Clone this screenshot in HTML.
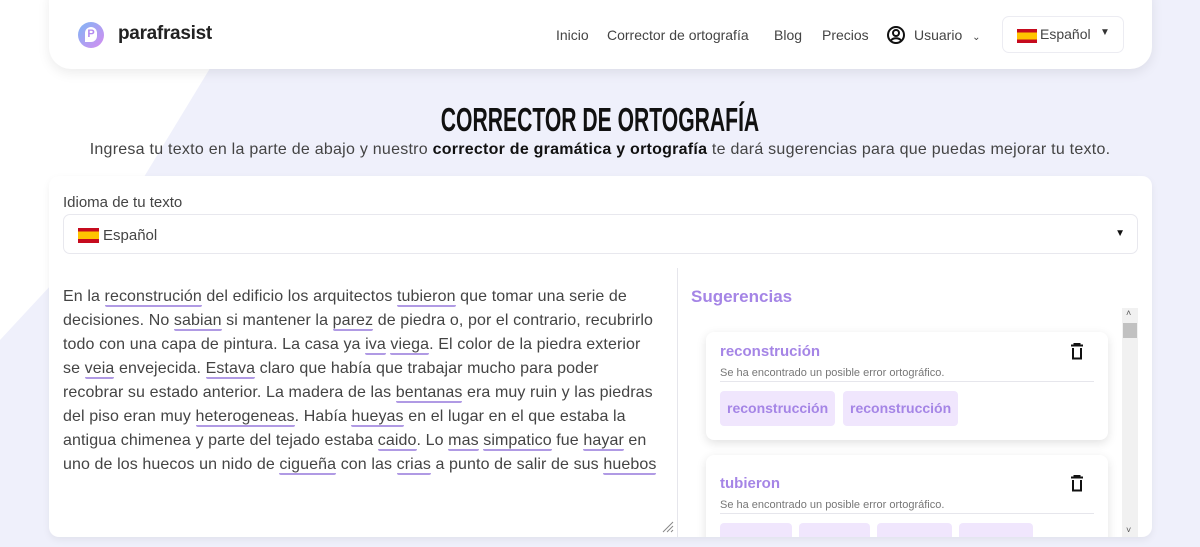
<!DOCTYPE html>
<html><head><meta charset="utf-8"><style>
*{box-sizing:border-box;margin:0;padding:0}
body{width:1200px;height:547px;overflow:hidden;background:#eff0fb;font-family:"Liberation Sans",sans-serif;color:#333;position:relative}
.nav{position:absolute;left:49px;top:-20px;width:1103px;height:89px;background:#fff;border-radius:22px;box-shadow:0 4px 12px rgba(0,0,0,.08)}
.logo{position:absolute;left:78px;top:22px;width:26px;height:26px;border-radius:50%;background:linear-gradient(135deg,#7fb6f5,#d68cf0)}
.logo span{position:absolute;left:7px;top:5px;width:12px;height:15px;background:#fff;border-radius:6px 6px 6px 0;color:#b48af0;font:bold 11px "Liberation Sans";text-align:center;line-height:15px}
.brand{position:absolute;left:118px;top:23px;font:bold 19px "Liberation Sans",sans-serif;color:#222;letter-spacing:-.3px}
.nl{position:absolute;top:27px;font-size:14px;color:#444}
.lang{position:absolute;left:1002px;top:16px;width:122px;height:37px;border:1px solid #ececf2;border-radius:7px;background:#fff}
.flag{display:inline-block;width:20px;height:14px;background:linear-gradient(#c60b1e 0 25%,#ffc400 25% 75%,#c60b1e 75%);vertical-align:middle}
h1{position:absolute;left:0;width:1200px;top:101px;text-align:center;font:bold 33px "Liberation Sans",sans-serif;color:#111;transform:scaleX(.64)}
.sub{position:absolute;left:0;width:1200px;top:141px;text-align:center;font-size:16px;letter-spacing:.25px;color:#444}
.sub b{color:#111}
.card{position:absolute;left:49px;top:176px;width:1103px;height:361px;background:#fff;border-radius:10px;box-shadow:0 3px 8px rgba(0,0,0,.06)}
.lbl{position:absolute;left:63px;top:194px;font-size:15px;color:#444}
.sel{position:absolute;left:63px;top:214px;width:1075px;height:40px;border:1px solid #e8e8ee;border-radius:7px;background:#fff}
.txt{position:absolute;left:63px;top:285px;font-size:16px;line-height:24px;color:#444;white-space:nowrap;letter-spacing:.1px}
.txt u{text-decoration:none;border-bottom:2px solid #b09ae4;border-radius:2px}
.vd{position:absolute;left:677px;top:268px;width:1px;height:269px;background:#e6e6ec}
.sg{position:absolute;left:691px;top:287px;font-size:17px;color:#a585e6;font-weight:bold}
.clip{position:absolute;left:690px;top:308px;width:448px;height:229px;overflow:hidden}
.sb{position:absolute;left:432px;top:0;width:16px;height:229px;background:#f1f1f1}
.sc{position:absolute;background:#fff;border-radius:8px;box-shadow:0 3px 10px rgba(0,0,0,.12);left:16px;width:402px}
.w{position:absolute;left:14px;font-size:15px;color:#a585e6;font-weight:bold}
.m{position:absolute;left:14px;font-size:11px;color:#777;width:374px;border-bottom:1px solid #e6e6ec;padding-bottom:2px}
.chip{position:absolute;height:35px;background:#f0e6fd;border-radius:4px;color:#a585e6;font-weight:bold;font-size:14px;line-height:35px;padding:0 7px}
.trash{position:absolute;right:24px}
</style></head><body>
<svg style="position:absolute;left:0;top:0" width="1200" height="547"><rect x="0" y="0" width="1100" height="60" fill="#fff"/><polygon points="0,60 215,60 130,200 0,340" fill="#fff"/></svg>
<div class="nav"></div>
<div class="logo"><span>P</span></div>
<div class="brand">parafrasist</div>
<div class="nl" style="left:556px">Inicio</div>
<div class="nl" style="left:607px">Corrector de ortografía</div>
<div class="nl" style="left:774px">Blog</div>
<div class="nl" style="left:822px">Precios</div>
<svg style="position:absolute;left:886px;top:25px" width="20" height="20" viewBox="0 0 20 20"><circle cx="10" cy="10" r="8" fill="none" stroke="#111" stroke-width="2"/><circle cx="10" cy="8" r="3" fill="none" stroke="#111" stroke-width="2"/><path d="M5 15.5c2-3 8-3 10 0" fill="none" stroke="#111" stroke-width="2"/></svg>
<div class="nl" style="left:914px">Usuario <span style="font-size:10px;margin-left:6px">&#8964;</span></div>
<div class="lang"><span style="position:absolute;left:14px;top:10px"><span class="flag"></span></span><span style="position:absolute;left:37px;top:9px;font-size:14px;color:#444">Español</span><span style="position:absolute;left:97px;top:10px;font-size:10px">&#9660;</span></div>
<h1>CORRECTOR DE ORTOGRAFÍA</h1>
<div class="sub">Ingresa tu texto en la parte de abajo y nuestro <b>corrector de gramática y ortografía</b> te dará sugerencias para que puedas mejorar tu texto.</div>
<div class="card"></div>
<div class="lbl">Idioma de tu texto</div>
<div class="sel"><span style="position:absolute;left:14px;top:12px"><span class="flag" style="width:21px;height:15px"></span></span><span style="position:absolute;left:39px;top:12px;font-size:15px;color:#444">Español</span><span style="position:absolute;right:12px;top:13px;font-size:10px;color:#111">&#9660;</span></div>
<div class="txt">En la <u>reconstrución</u> del edificio los arquitectos <u>tubieron</u> que tomar una serie de<br>decisiones. No <u>sabian</u> si mantener la <u>parez</u> de piedra o, por el contrario, recubrirlo<br>todo con una capa de pintura. La casa ya <u>iva</u> <u>viega</u>. El color de la piedra exterior<br>se <u>veia</u> envejecida. <u>Estava</u> claro que había que trabajar mucho para poder<br>recobrar su estado anterior. La madera de las <u>bentanas</u> era muy ruin y las piedras<br>del piso eran muy <u>heterogeneas</u>. Había <u>hueyas</u> en el lugar en el que estaba la<br>antigua chimenea y parte del tejado estaba <u>caido</u>. Lo <u>mas</u> <u>simpatico</u> fue <u>hayar</u> en<br>uno de los huecos un nido de <u>cigueña</u> con las <u>crias</u> a punto de salir de sus <u>huebos</u></div>
<svg style="position:absolute;left:662px;top:521px" width="12" height="12"><path d="M1 11L11 1M5 11L11 5M9 11L11 9" stroke="#888" stroke-width="1"/></svg>
<div class="vd"></div>
<div class="sg">Sugerencias</div>
<div class="clip">
<div class="sb"><div style="position:absolute;left:1px;top:15px;width:14px;height:15px;background:#c1c1c1"></div><span style="position:absolute;left:4px;top:0;font-size:9px;color:#555">&#708;</span><span style="position:absolute;left:4px;bottom:2px;font-size:9px;color:#555">&#709;</span></div>
<div class="sc" style="top:24px;height:108px">
<div class="w" style="top:11px">reconstrución</div>
<svg class="trash" style="top:11px" width="14" height="17" viewBox="0 0 14 17"><path d="M1 2.5h12M4.5 2.5V1h5v1.5M3 5v10.5h8V5" fill="none" stroke="#111" stroke-width="2"/></svg>
<div class="m" style="top:35px">Se ha encontrado un posible error ortográfico.</div>
<div class="chip" style="left:14px;top:59px">reconstrucción</div>
<div class="chip" style="left:137px;top:59px">reconstrucción</div>
</div>
<div class="sc" style="top:147px;height:100px">
<div class="w" style="top:20px">tubieron</div>
<svg class="trash" style="top:20px" width="14" height="17" viewBox="0 0 14 17"><path d="M1 2.5h12M4.5 2.5V1h5v1.5M3 5v10.5h8V5" fill="none" stroke="#111" stroke-width="2"/></svg>
<div class="m" style="top:44px">Se ha encontrado un posible error ortográfico.</div>
<div class="chip" style="left:14px;top:68px;width:72px"></div>
<div class="chip" style="left:93px;top:68px;width:71px"></div>
<div class="chip" style="left:171px;top:68px;width:75px"></div>
<div class="chip" style="left:253px;top:68px;width:74px"></div>
</div>
</div>
</body></html>
